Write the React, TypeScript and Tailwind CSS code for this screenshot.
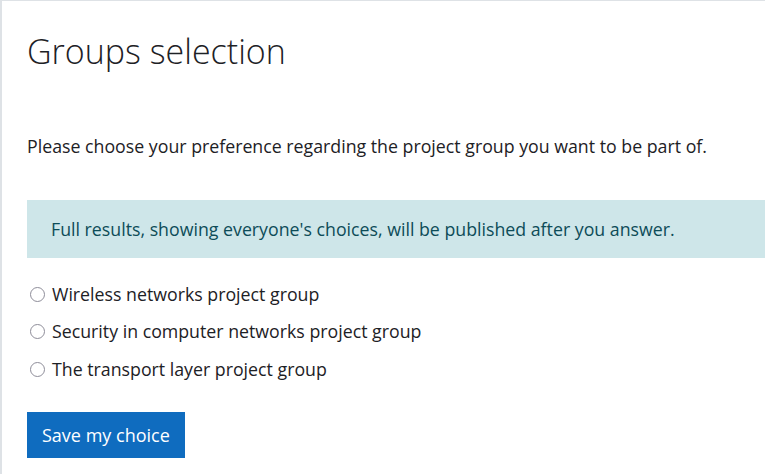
import React from "react";

const options = [
  "Wireless networks project group",
  "Security in computer networks project group",
  "The transport layer project group",
];

export default function App() {
  return (
    <div
      className="w-[765px] h-[474px] overflow-hidden bg-white border-t border-l-2 border-[#dee2e6] text-[#1d2125]"
      style={{ fontFamily: '"Open Sans", "Noto Sans", sans-serif' }}
    >
      <div className="pl-[25px]">
        <h2 className="pt-[26px] text-[34px] leading-[48px] font-light text-[#1d2125]">
          Groups selection
        </h2>
        <p className="mt-[58px] text-[17.75px] leading-[26px]">
          Please choose your preference regarding the project group you want to be part of.
        </p>
        <div className="mt-[41px] h-[58px] flex items-center pl-[24px] bg-[#cee6e9] text-[#0d4c58] text-[17.75px]">
          Full results, showing everyone's choices, will be published after you answer.
        </div>
        <div className="mt-[23px] flex flex-col gap-[11.5px] pl-[3px]">
          {options.map((o) => (
            <label key={o} className="flex items-center h-[26px] text-[17.75px] gap-[7px]">
              <span className="shrink-0 w-[15px] h-[15px] rounded-full border-[1.5px] border-[#8e8d99] bg-white" />
              <span>{o}</span>
            </label>
          ))}
        </div>
        <button className="mt-[30px] h-[46px] px-[15px] bg-[#0f6cbf] text-white text-[18px]">
          Save my choice
        </button>
      </div>
    </div>
  );
}
